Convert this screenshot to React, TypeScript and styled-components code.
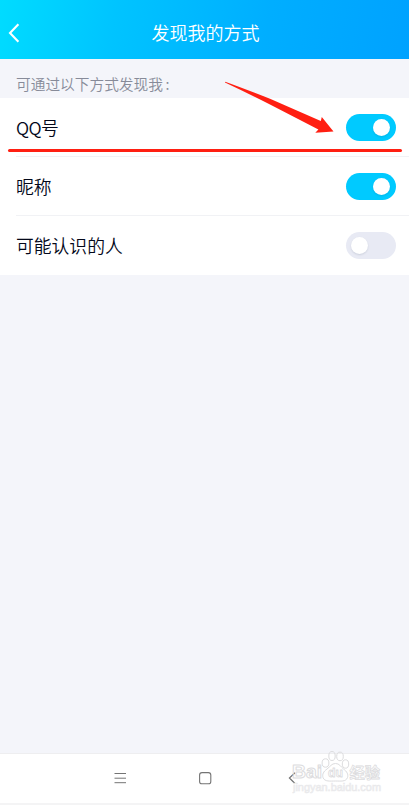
import React from 'react';
import styled, { createGlobalStyle } from 'styled-components';

const GlobalStyle = createGlobalStyle`
  * { box-sizing: border-box; }
  body {
    margin: 0;
    background: #f4f5fa;
    font-family: "Noto Sans CJK SC", sans-serif;
  }
`;

const Screen = styled.div`
  position: relative;
  display: flex;
  flex-direction: column;
  width: 409px;
  height: 805px;
  overflow: hidden;
  background: #f4f5fa;
`;

const Header = styled.header`
  display: grid;
  grid-template-columns: 40px 1fr 40px;
  align-items: center;
  height: 59px;
  padding-top: 7px;
  flex: none;
  background: linear-gradient(100deg, #00dcff 0%, #00c4ff 28%, #00aeff 65%, #00a2ff 100%);
`;

const BackButton = styled.button`
  display: flex;
  padding: 0 0 0 7px;
  border: 0;
  background: none;
`;

const Title = styled.h1`
  margin: -2px 0 0;
  padding-left: 2px;
  text-align: center;
  font-size: 18px;
  line-height: 26px;
  font-weight: 350;
  color: #fff;
`;

const SectionLabel = styled.div`
  flex: none;
  height: 39px;
  padding: 12px 16px 0;
  font-size: 14.7px;
  line-height: 26px;
  font-weight: 350;
  color: #878b99;
  white-space: nowrap;
`;

const Colon = styled.span`
  margin-left: 2.5px;
`;

const List = styled.main`
  flex: none;
  background: #fff;
`;

const Row = styled.div`
  display: flex;
  align-items: center;
  justify-content: space-between;
  height: 59px;
  margin-left: 16px;
  padding-right: 13px;
  border-bottom: 1px solid #f1f2f5;
  font-size: 17.8px;
  font-weight: 350;
  color: #03081a;

  &:last-child { border-bottom-color: transparent; }
`;

const RowText = styled.span<{ $spacing?: string }>`
  line-height: 26px;
  letter-spacing: ${(p) => p.$spacing ?? 'normal'};
`;

const Switch = styled.span<{ $on: boolean }>`
  display: flex;
  align-items: center;
  justify-content: ${(p) => (p.$on ? 'flex-end' : 'flex-start')};
  width: 50px;
  height: 27.4px;
  margin-top: 1px;
  padding: 0 5.6px 0 5px;
  border-radius: 14px;
  background: ${(p) => (p.$on ? '#00caff' : '#e8eaf4')};
`;

const Knob = styled.span`
  width: 17.2px;
  height: 17.2px;
  border-radius: 50%;
  background: #fff;
  box-shadow: 0 1px 2px rgba(0, 30, 60, 0.12);
`;

const Spacer = styled.div`
  flex: 1;
`;

const NavBar = styled.nav`
  display: flex;
  align-items: center;
  justify-content: space-between;
  flex: none;
  height: 52px;
  padding: 0 111px 2px 112px;
  border-top: 1px solid #eeeef0;
  border-bottom: 2px solid #f4f4f5;
  background: #fff;
`;

const Annotation = styled.svg`
  position: absolute;
  left: 0;
  top: 76px;
  pointer-events: none;
`;

const Watermark = styled.svg`
  position: absolute;
  left: 285px;
  top: 748px;
  pointer-events: none;
`;

const settings = [
  { label: 'QQ号', on: true, spacing: '-0.6px' },
  { label: '昵称', on: true },
  { label: '可能认识的人', on: false },
];

export default function App() {
  return (
    <>
      <GlobalStyle />
      <Screen>
        <Header>
          <BackButton aria-label="返回">
            <svg width="14" height="20" viewBox="0 0 14 20" fill="none" stroke="#fff" strokeWidth="2.1">
              <path d="M11.4 1.2 3 10l8.4 8.8" />
            </svg>
          </BackButton>
          <Title>发现我的方式</Title>
        </Header>
        <SectionLabel>可通过以下方式发现我<Colon>:</Colon></SectionLabel>
        <List>
          {settings.map((item) => (
            <Row key={item.label}>
              <RowText $spacing={item.spacing}>{item.label}</RowText>
              <Switch $on={item.on} role="switch" aria-checked={item.on}>
                <Knob />
              </Switch>
            </Row>
          ))}
        </List>
        <Spacer />
        <NavBar>
          <svg width="16" height="16" viewBox="0 0 16 16" stroke="#747474" strokeWidth="1">
            <path d="M2.5 3.5h11.5M2.5 8.2h11.5M2.5 12.7h11.5" />
          </svg>
          <svg width="16" height="16" viewBox="0 0 16 16" fill="none" stroke="#747474" strokeWidth="1.1">
            <rect x="2.6" y="2.6" width="11.2" height="11.2" rx="2.4" />
          </svg>
          <svg width="16" height="16" viewBox="0 0 16 16" fill="none" stroke="#747474" strokeWidth="1.2">
            <path d="M13 2.7 7.4 8l5.6 5.5" />
          </svg>
        </NavBar>
        <Annotation width="409" height="80" viewBox="0 76 409 80">
          <path
            d="M225.2 81.7 Q240 87 270 98.7 L320.8 121 L321.8 117 L333.5 131.5 L315.3 132.8 L318.4 129.4 L270 104.5 Q245 92 225 82.6Z"
            fill="#ff1f12"
          />
          <path d="M9.5 150.5H400.5" stroke="#ff1f12" strokeWidth="3" strokeLinecap="round" />
        </Annotation>
        <Watermark width="110" height="52" viewBox="285 748 110 52">
          <g fill="none" stroke="#dcdcde" strokeWidth="1" strokeLinejoin="round">
            <text x="292" y="778" fontFamily="Liberation Sans" fontWeight="700" fontSize="19" textLength="30" lengthAdjust="spacingAndGlyphs">Bai</text>
            <ellipse cx="325.5" cy="763" rx="3.4" ry="4.2" />
            <ellipse cx="332" cy="756" rx="3.2" ry="4.5" />
            <ellipse cx="340" cy="756.4" rx="3.3" ry="4.3" />
            <ellipse cx="345.5" cy="764" rx="3.2" ry="4.2" />
            <path d="M335.5 763.5c4 0 5 3 8 5.500 3.500 2.500 5 5.500 4 8.500-1.500 4.500-7 3.500-12 3.500s-11 1-12.500-3.500c-1-3 .5-6 4-8.500 3.500-2.500 4.500-5.500 8.500-5.500Z" />
            <text x="328" y="777" fontFamily="Liberation Sans" fontWeight="700" fontSize="12.5" textLength="15" lengthAdjust="spacingAndGlyphs" strokeWidth="0.8">du</text>
            <text x="349.5" y="777.5" fontFamily="Noto Sans CJK SC" fontWeight="700" fontSize="15.3" strokeWidth="0.8">经验</text>
            <text x="293" y="791" fontFamily="Liberation Sans" fontSize="11.5" textLength="88" lengthAdjust="spacingAndGlyphs" strokeWidth="0.6" fill="#f2f2f3" stroke="#e9e9eb">jingyan.baidu.com</text>
          </g>
        </Watermark>
      </Screen>
    </>
  );
}
